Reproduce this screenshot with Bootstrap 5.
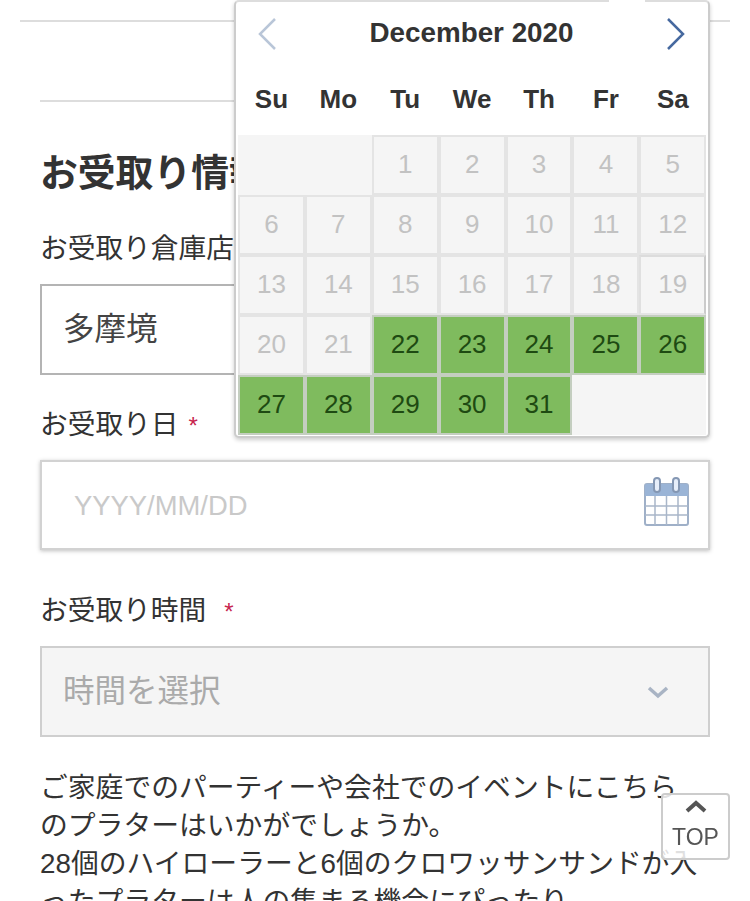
<!DOCTYPE html>
<html lang="ja">
<head>
<meta charset="utf-8">
<title>お受取り情報</title>
<link rel="stylesheet" href="https://cdn.jsdelivr.net/npm/bootstrap@5.3.0/dist/css/bootstrap.min.css">
<style>
html,body{height:901px;overflow:hidden}
body{font-family:"Liberation Sans","Noto Sans CJK JP",sans-serif;color:#333;background:#fff}
.page-wrap{padding:20px 20px 0;position:relative}
.rule-a{height:2px;background:#ddd;margin-bottom:78px}
.inner-wrap{padding:0 20px;position:relative}
.rule-b{height:2px;background:#ddd;margin-bottom:48px}
.sec-title{font-size:37.8px;font-weight:700;line-height:46px;margin:0 0 34px;color:#333;white-space:nowrap}
.fld-label{font-size:27.7px;line-height:38px;margin-bottom:15px;color:#333;display:block}
.fld-label-first{margin-bottom:16px}
.req-mark{color:#c7254e;font-size:24px;margin-left:10px}
.req-far{margin-left:18px}
.fld-box{height:91px;border:2px solid #b4b4b4;font-size:31.5px;padding:1px 21px 0;color:#444;background:#fff}
.mb-store{margin-bottom:31px}
.date-box{border-color:#d2d2d2;box-shadow:0 1px 4px rgba(0,0,0,.25);margin-bottom:42px;padding:2px 18px 0 32px;height:90px}
.date-ph{font-size:27.4px;color:#c9c9c9}
.date-icon{margin-bottom:8px}
.time-box{background:#f5f5f5;border-color:#cfcfcf;color:#aaa;margin-bottom:32px;padding-right:38px}
.desc-text{font-size:27.8px;line-height:38px;color:#333;margin:0;white-space:nowrap}
.cal-pop{position:absolute;left:234px;top:0;width:476px;height:438px;background:#fff;border:2px solid #ccc;border-top-color:#ddd;border-radius:5px;box-shadow:0 2px 4px rgba(0,0,0,.2);padding:0 1px 0 2px}
.cal-notch{position:absolute;left:373px;top:-2px;width:36px;height:3px;background:#fff}
.cal-head{height:64px;padding:0 21px 0 19px}
.cal-title{font-size:27.8px;font-weight:700;color:#333;margin-bottom:2px}
.cal-week{display:grid;grid-template-columns:repeat(7,66.9px);height:69px;font-size:26px;font-weight:700;color:#333;text-align:center;line-height:67px}
.cal-grid{display:grid;grid-template-columns:repeat(7,66.9px);grid-auto-rows:60px;font-size:26px;text-align:center;line-height:54px}
.cal-day{background:#f5f5f5;border:2px solid #e4e4e4;color:#c2c2c2}
.cal-edge{border-color:#dcdcdc #cbcbcb #e4e4e4 #e0e0e0}
.cal-blank{background:#f5f5f5}
.cal-open{background:#7fbb5e;border-color:#c4cec0;color:#1e4a12}
.top-btn{position:fixed;left:661px;top:793px;width:69px;height:67px;background:rgba(255,255,255,.85);border:2px solid #ccc;border-radius:4px;color:#555;font-size:23px;line-height:26px;padding-top:3px}
.top-word{margin-top:10px}
</style>
</head>
<body>
<div class="page-wrap">
  <div class="rule-a"></div>
  <div class="inner-wrap">
    <div class="rule-b"></div>
    <h2 class="sec-title">お受取り情報</h2>
    <label class="fld-label fld-label-first">お受取り倉庫店舗</label>
    <div class="fld-box mb-store d-flex align-items-center">多摩境</div>
    <label class="fld-label">お受取り日<span class="req-mark">*</span></label>
    <div class="fld-box date-box d-flex align-items-center justify-content-between">
      <span class="date-ph">YYYY/MM/DD</span>
      <svg class="date-icon" width="46" height="50" viewBox="0 0 46 50" aria-hidden="true">
        <rect x="1" y="7" width="43" height="41" rx="2" fill="#fff" stroke="#9fb0c8" stroke-width="2"/>
        <path d="M1 9a2 2 0 0 1 2-2h39a2 2 0 0 1 2 2v10H1z" fill="#9ab4d6"/>
        <path d="M1 29h43M1 38h43M11 19v29M22.500 19v29M34 19v29" stroke="#a9b6c9" stroke-width="1.500" fill="none"/>
        <rect x="10" y="1" width="6" height="14" rx="3" fill="#e6eefa" stroke="#8497b3" stroke-width="2"/>
        <rect x="29" y="1" width="6" height="14" rx="3" fill="#e6eefa" stroke="#8497b3" stroke-width="2"/>
      </svg>
    </div>
    <label class="fld-label">お受取り時間<span class="req-mark req-far">*</span></label>
    <div class="fld-box time-box d-flex align-items-center justify-content-between">
      <span>時間を選択</span>
      <svg width="24" height="16" viewBox="0 0 24 16" aria-hidden="true"><path d="M3 4l9 8 9-8" fill="none" stroke="#a9b4c4" stroke-width="3.500"/></svg>
    </div>
    <p class="desc-text">ご家庭でのパーティーや会社でのイベントにこちら<br>のプラターはいかがでしょうか。<br>28個のハイローラーと6個のクロワッサンサンドが入<br>ったプラターは人の集まる機会にぴったり</p>
  </div>
</div>

<div class="cal-pop">
  <div class="cal-notch"></div>
  <div class="cal-head d-flex align-items-center justify-content-between">
    <svg width="20" height="34" viewBox="0 0 20 34" aria-hidden="true"><path d="M18 2L3 17l15 15" fill="none" stroke="#b9c6d8" stroke-width="2.500"/></svg>
    <span class="cal-title">December 2020</span>
    <svg width="20" height="34" viewBox="0 0 20 34" aria-hidden="true"><path d="M2 2l15 15L2 32" fill="none" stroke="#46699f" stroke-width="2.500"/></svg>
  </div>
  <div class="cal-week"><span>Su</span><span>Mo</span><span>Tu</span><span>We</span><span>Th</span><span>Fr</span><span>Sa</span></div>
  <div class="cal-grid">
    <div class="cal-blank"></div><div class="cal-blank"></div>
    <div class="cal-day">1</div><div class="cal-day">2</div><div class="cal-day">3</div><div class="cal-day">4</div><div class="cal-day">5</div>
    <div class="cal-day">6</div><div class="cal-day">7</div><div class="cal-day">8</div><div class="cal-day">9</div><div class="cal-day">10</div><div class="cal-day">11</div><div class="cal-day">12</div>
    <div class="cal-day">13</div><div class="cal-day">14</div><div class="cal-day">15</div><div class="cal-day">16</div><div class="cal-day">17</div><div class="cal-day">18</div><div class="cal-day cal-edge">19</div>
    <div class="cal-day">20</div><div class="cal-day">21</div>
    <div class="cal-day cal-open">22</div><div class="cal-day cal-open">23</div><div class="cal-day cal-open">24</div><div class="cal-day cal-open">25</div><div class="cal-day cal-open">26</div>
    <div class="cal-day cal-open">27</div><div class="cal-day cal-open">28</div><div class="cal-day cal-open">29</div><div class="cal-day cal-open">30</div><div class="cal-day cal-open">31</div>
    <div class="cal-blank"></div><div class="cal-blank"></div>
  </div>
</div>

<div class="top-btn d-flex flex-column align-items-center">
  <svg width="24" height="16" viewBox="0 0 24 16" aria-hidden="true"><path d="M3 13l9-8 9 8" fill="none" stroke="#555" stroke-width="4"/></svg>
  <span class="top-word">TOP</span>
</div>
<script src="https://cdn.jsdelivr.net/npm/bootstrap@5.3.0/dist/js/bootstrap.bundle.min.js"></script>
</body>
</html>
